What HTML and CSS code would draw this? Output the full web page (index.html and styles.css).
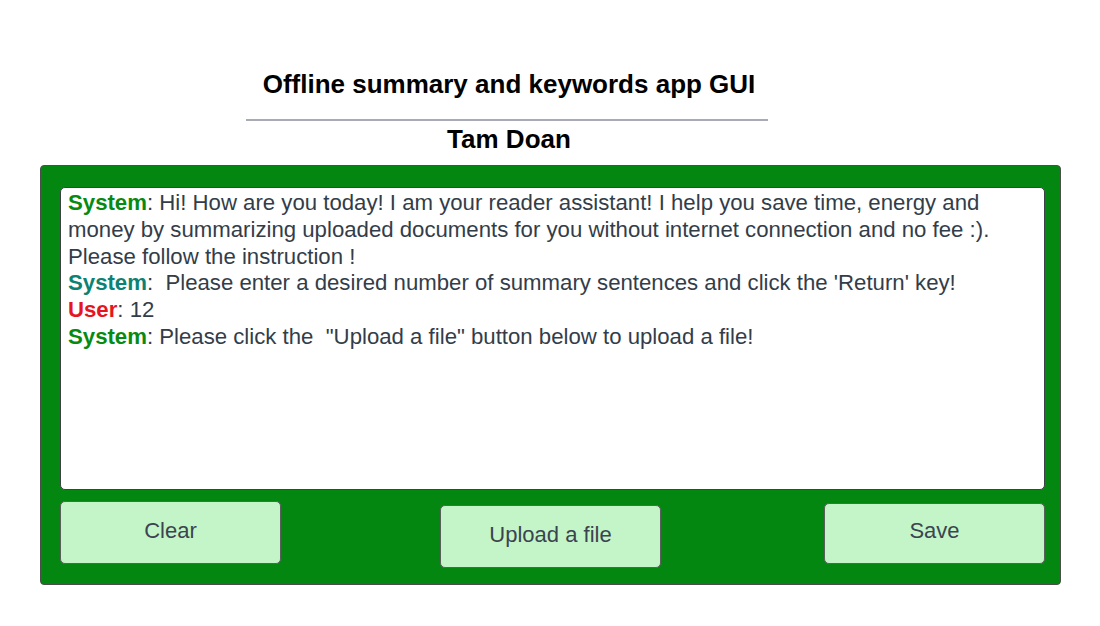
FILE: index.html
```html
<!DOCTYPE html>
<html>
<head>
<meta charset="utf-8">
<link rel="stylesheet" href="styles.css">
</head>
<body>
<div class="page">
  <header class="header">
    <h1 class="title">Offline summary and keywords app GUI</h1>
    <div class="rule"></div>
    <h2 class="author">Tam Doan</h2>
  </header>
  <main class="panel">
    <div class="chat">
      <p class="msg"><span class="sys">System</span>: Hi! How are you today! I am your reader assistant! I help you save time, energy and money by summarizing uploaded documents for you without internet connection and no fee :). Please follow the instruction !</p>
      <p class="msg"><span class="sys2">System</span>:&nbsp; Please enter a desired number of summary sentences and click the 'Return' key!</p>
      <p class="msg"><span class="user">User</span>: 12</p>
      <p class="msg"><span class="sys">System</span>: Please click the&nbsp; "Upload a file" button below to upload a file!</p>
    </div>
    <div class="buttons">
      <button class="btn btn-clear">Clear</button>
      <button class="btn btn-upload">Upload a file</button>
      <button class="btn btn-save">Save</button>
    </div>
  </main>
</div>
</body>
</html>
```

FILE: styles.css
```css
* { box-sizing: border-box; }
html, body {
  margin: 0;
  padding: 0;
  background: #ffffff;
  font-family: "Liberation Sans", Arial, sans-serif;
}
.page {
  width: 1100px;
  height: 626px;
  padding-top: 68px;
}
.header {
  width: 522px;
  margin-left: 246px;
  display: flex;
  flex-direction: column;
  align-items: center;
}
.title {
  margin: 0 0 0 4px;
  font-size: 26px;
  font-weight: bold;
  line-height: 32px;
  color: #000;
}
.rule {
  align-self: stretch;
  height: 2px;
  background: #a8abb5;
  margin-top: 19px;
}
.author {
  margin: 2px 0 0 4px;
  font-size: 26px;
  font-weight: bold;
  line-height: 32px;
  color: #000;
}
.panel {
  margin: 10px 0 0 40px;
  width: 1021px;
  height: 420px;
  background: #038711;
  border: 1px solid #4a4f4a;
  border-radius: 4px;
  padding: 21px 15px 0 19px;
}
.chat {
  height: 303px;
  background: #ffffff;
  border: 1px solid #3d4147;
  border-radius: 5px;
  padding: 2px 8px 0 7px;
}
.msg {
  margin: 0;
  font-size: 22.2px;
  line-height: 26.8px;
  color: #333d49;
}
.sys { color: #078a12; font-weight: bold; }
.sys2 { color: #0c8273; font-weight: bold; }
.user { color: #e5161e; font-weight: bold; }
.buttons {
  display: flex;
  justify-content: space-between;
  align-items: flex-start;
  margin-top: 11px;
}
.btn {
  width: 221px;
  height: 63px;
  background: #c3f5c9;
  border: 1px solid #5a5f5c;
  border-radius: 5px;
  font-family: "Liberation Sans", Arial, sans-serif;
  font-size: 22px;
  color: #3b4450;
  padding: 0;
  padding-bottom: 4px;
}
.btn-upload { margin-top: 4px; margin-right: 4px; }
.btn-save { margin-top: 2px; height: 61px; padding-bottom: 5px; }
```
